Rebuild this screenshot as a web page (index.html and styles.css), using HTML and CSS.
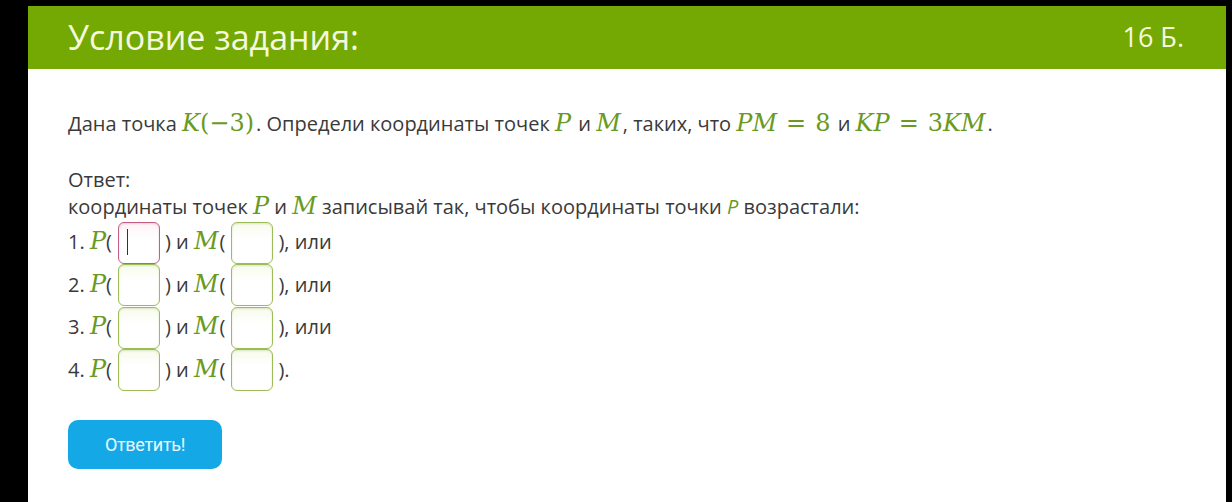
FILE: index.html
```html
<!DOCTYPE html>
<html lang="ru">
<head>
<meta charset="utf-8">
<title>Условие задания</title>
<link rel="stylesheet" href="styles.css">
</head>
<body>
<div class="panel">
  <div class="head">
    <h1 class="title">Условие задания:</h1>
    <span class="score">16 Б.</span>
  </div>
  <div class="content">
    <p class="task">Дана точка <span class="m"><i>K</i>(−3)</span>. Определи координаты точек <span class="m"><i>P</i></span> и <span class="m"><i>M</i></span>, таких, что <span class="m"><i>PM</i><span class="op">=</span>8</span> и <span class="m"><i>KP</i><span class="op">=</span>3<i>KM</i></span>.</p>
    <p class="label">Ответ:<br>координаты точек <span class="m"><i>P</i></span> и <span class="m"><i>M</i></span> записывай так, чтобы координаты точки <i class="sp">P</i> возрастали:</p>
    <div class="rows">
      <div class="row">1. <span class="m"><i>P</i></span>(<span class="box focus"><span class="caret"></span></span>) и <span class="m"><i>M</i></span><span class="lp">(</span><span class="box"></span>), или</div>
      <div class="row">2. <span class="m"><i>P</i></span>(<span class="box"></span>) и <span class="m"><i>M</i></span><span class="lp">(</span><span class="box"></span>), или</div>
      <div class="row">3. <span class="m"><i>P</i></span>(<span class="box"></span>) и <span class="m"><i>M</i></span><span class="lp">(</span><span class="box"></span>), или</div>
      <div class="row">4. <span class="m"><i>P</i></span>(<span class="box"></span>) и <span class="m"><i>M</i></span><span class="lp">(</span><span class="box"></span>).</div>
    </div>
    <button class="btn" type="button">Ответить!</button>
  </div>
</div>
</body>
</html>
```

FILE: styles.css
```css
html, body {
  margin: 0;
  padding: 0;
  background: #000;
}
body {
  padding-top: 6px;
  height: 496px;
  overflow: hidden;
  font-family: "Open Sans", "Noto Sans", sans-serif;
}
.panel {
  margin-left: 28px;
  width: 1198px;
  height: 496px;
  background: #fff;
}
.head {
  height: 63px;
  background: #74a803;
  display: flex;
  align-items: center;
  justify-content: space-between;
  padding: 0 42px 0 40px;
  color: #f4f8df;
}
.title {
  margin: 0;
  font-weight: 400;
  font-size: 34px;
  line-height: 1;
  padding-bottom: 2px;
}
.score {
  font-size: 27px;
  line-height: 1;
  padding-bottom: 2px;
}
.content {
  padding: 41px 40px 0 40px;
  color: #3a3a3a;
  font-size: 20px;
  line-height: 27px;
}
.task {
  margin: 0 0 29px 0;
}
.label {
  margin: 0;
}
.m {
  font-family: "DejaVu Serif", "Liberation Serif", serif;
  font-size: 24px;
  color: #6a9a22;
}
.task .m {
  margin-right: 2px;
}
.m i {
  font-style: italic;
}
.op {
  margin: 0 9px;
}
.sp {
  color: #6a9a22;
  font-style: italic;
}
.lp {
  margin-left: 1px;
}
.row {
  height: 42.5px;
  line-height: 42.5px;
  white-space: nowrap;
}
.box {
  display: inline-block;
  box-sizing: border-box;
  width: 42px;
  height: 42px;
  vertical-align: middle;
  margin: -2px 5px 0 6px;
  border: 1.5px solid #9cbc57;
  border-radius: 6px;
  background: linear-gradient(#f8fbec, #ffffff 40%);
  box-shadow: inset 0 1px 2px rgba(130, 170, 60, 0.25);
  position: relative;
}
.box.focus {
  border-color: #c45e86;
  background: linear-gradient(#fdf3f6, #ffffff 40%);
  box-shadow: inset 0 1px 2px rgba(190, 90, 130, 0.25);
}
.caret {
  position: absolute;
  left: 8px;
  top: 6px;
  width: 1px;
  height: 26px;
  background: #333;
}
.btn {
  display: block;
  margin-top: 30px;
  width: 154px;
  height: 49px;
  border: 0;
  border-radius: 10px;
  background: #14a9e6;
  color: #eef9ff;
  font-family: Roboto, "Liberation Sans", sans-serif;
  font-size: 18px;
  letter-spacing: -0.3px;
  padding: 0;
  cursor: pointer;
}
```
